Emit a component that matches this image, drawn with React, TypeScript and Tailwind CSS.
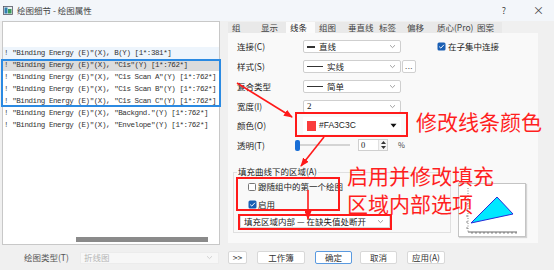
import React from "react";

const Chevron = ({ color = "#8a8a8a" }: { color?: string }) => (
  <svg width="7" height="5" viewBox="0 0 7 5" className="block shrink-0">
    <path d="M1 1.2 L3.5 3.6 L6 1.2" fill="none" stroke={color} strokeWidth="0.8" />
  </svg>
);

const Check = () => (
  <svg width="9" height="9" viewBox="0 0 9 9" className="block shrink-0">
    <rect x="0.5" y="0.5" width="8" height="8" rx="1.5" fill="#1a5fb4" />
    <path d="M2.2 4.6 L3.8 6.1 L6.9 2.8" fill="none" stroke="#fff" strokeWidth="1" />
  </svg>
);

const Dropdown = ({ children, arrow }: { children?: React.ReactNode; arrow?: React.ReactNode }) => (
  <div className="flex h-[13px] w-[98px] items-center rounded-[2px] border border-[#cfcfcf] bg-white pl-[3px] pr-[4px]">
    <div className="flex flex-1 items-center gap-[3px] leading-none">{children}</div>
    {arrow ?? <Chevron />}
  </div>
);

const rows = [
  `! "Binding Energy (E)"(X), B(Y) [1*:381*]`,
  `! "Binding Energy (E)"(X), "C1s"(Y) [1*:762*]`,
  `! "Binding Energy (E)"(X), "C1s Scan A"(Y) [1*:762*]`,
  `! "Binding Energy (E)"(X), "C1s Scan B"(Y) [1*:762*]`,
  `! "Binding Energy (E)"(X), "C1s Scan C"(Y) [1*:762*]`,
  `! "Binding Energy (E)"(X), "Backgnd."(Y) [1*:762*]`,
  `! "Binding Energy (E)"(X), "Envelope"(Y) [1*:762*]`,
];

const tabs: { t: string; w: string }[] = [
  { t: "组", w: "w-[29px]" },
  { t: "显示", w: "w-[29px]" },
  { t: "线条", w: "w-[29px]" },
  { t: "组图", w: "w-[29px]" },
  { t: "垂直线", w: "w-[31px]" },
  { t: "标签", w: "w-[28px]" },
  { t: "偏移", w: "w-[30px]" },
  { t: "质心(Pro)", w: "w-[40px]" },
  { t: "图案", w: "w-[29px]" },
];

const Btn = ({ children, w, primary }: { children: React.ReactNode; w: string; primary?: boolean }) => (
  <div
    className={`flex h-[13px] items-center justify-center rounded-[2px] border bg-white text-[8.5px] leading-none text-[#333] ${w} ${
      primary ? "border-[#5a9ae0]" : "border-[#d8d8d8]"
    }`}
  >
    {children}
  </div>
);

export default function App() {
  return (
    <div className="relative h-[270px] w-[554px] overflow-hidden bg-[#f0f0f0] font-['Noto_Sans_CJK_SC','Noto_Sans',sans-serif] text-[#222]">
      {/* Title bar */}
      <div className="flex h-[21px] items-center bg-[#f3f6fa]">
        <svg width="10" height="9" viewBox="0 0 10 9" className="ml-[3px] block shrink-0">
          <rect x="0.5" y="0.5" width="9" height="8" fill="#e8f0f0" stroke="#556" strokeWidth="0.8" />
          <rect x="1.5" y="1.5" width="3" height="6" fill="#2f7fb0" />
          <rect x="5" y="3" width="3.5" height="4.5" fill="#3a9a5a" />
        </svg>
        <span className="ml-[4px] text-[8.5px] leading-none text-[#444]">绘图细节 - 绘图属性</span>
        <span className="ml-auto mr-[27px] text-[9px] leading-none text-[#444]">?</span>
        <span className="mr-[10px] text-[11px] leading-none text-[#444]">×</span>
      </div>

      {/* Body */}
      <div className="flex h-[224px]">
        {/* Left list panel */}
        <div className="ml-[2px] flex h-[224px] w-[218px] flex-col border border-[#c8c8c8] bg-white">
          <div className="flex-1 overflow-hidden pt-[25px]">
            {rows.map((r, i) => (
              <div
                key={i}
                className={`h-[12px] whitespace-pre pl-[1px] font-['Liberation_Mono','DejaVu_Sans_Mono',monospace] text-[7.5px] leading-[12px] tracking-[-0.42px] text-[#333] ${
                  i === 0 ? "bg-[#eef5fc]" : i === 1 ? "bg-[#dcdcdc]" : ""
                }`}
              >
                {r}
              </div>
            ))}
          </div>
          <div className="h-[8px]">
            <div className="ml-[73px] mt-[1px] h-[5px] w-[132px] bg-[#8a8a8a]" />
          </div>
        </div>

        {/* Right area */}
        <div className="ml-[8px] flex w-[310px] flex-col">
          {/* Tabs */}
          <div className="mt-[1px] flex h-[11px]">
            {tabs.map((t) => (
              <div
                key={t.t}
                className={`flex h-[11px] shrink-0 items-center whitespace-nowrap pl-[4px] text-[8.5px] leading-none ${t.w} ${
                  t.t === "线条" ? "bg-[#fbfbfb] text-[#222]" : "bg-[#e9e9e9] text-[#444]"
                }`}
              >
                {t.t}
              </div>
            ))}
          </div>

          {/* Tab panel */}
          <div className="flex h-[210px] flex-col bg-[#f9f9f9] pl-[9px] pt-[7px] text-[8.5px] leading-none">
            {/* 连接 */}
            <div className="flex h-[13px] items-center">
              <span className="w-[66px]">连接(C)</span>
              <Dropdown>
                <div className="h-[2px] w-[8px] bg-[#333]" />
                <span className="ml-[1px]">直线</span>
              </Dropdown>
              <div className="ml-[36px] flex items-center gap-[2px]">
                <Check />
                <span>在子集中连接</span>
              </div>
            </div>
            {/* 样式 */}
            <div className="mt-[7px] flex h-[13px] items-center">
              <span className="w-[66px]">样式(S)</span>
              <Dropdown>
                <div className="h-[1px] w-[16px] bg-[#333]" />
                <span className="ml-[1px]">实线</span>
              </Dropdown>
              <div className="ml-[1px] flex h-[13px] w-[14px] items-center justify-center rounded-[2px] border border-[#d0d0d0] bg-white pb-[2px] text-[8px] tracking-[0.5px] text-[#555]">
                ...
              </div>
            </div>
            {/* 复合类型 */}
            <div className="mt-[7px] flex h-[13px] items-center">
              <span className="w-[66px]">复合类型</span>
              <Dropdown>
                <div className="h-[1px] w-[16px] bg-[#333]" />
                <span className="ml-[1px]">简单</span>
              </Dropdown>
            </div>
            {/* 宽度 */}
            <div className="mt-[7px] flex h-[13px] items-center">
              <span className="w-[66px]">宽度(I)</span>
              <Dropdown>
                <span className="font-['Liberation_Serif',serif] text-[9px]">2</span>
              </Dropdown>
            </div>
            {/* 颜色 */}
            <div className="mt-[4px] flex h-[17px] items-center">
              <span className="w-[66px]">颜色(O)</span>
              <div className="flex h-[17px] w-[98px] items-center bg-white pl-[4px] pr-[4px]">
                <div className="h-[10px] w-[9px] bg-[#fa3c3c]" />
                <span className="ml-[3px] flex-1 font-['Liberation_Sans',sans-serif] text-[8.5px] text-[#222]">#FA3C3C</span>
                <svg width="7" height="5" viewBox="0 0 7 5" className="block">
                  <path d="M0.5 0.8 L6.5 0.8 L3.5 4.5 Z" fill="#111" />
                </svg>
              </div>
            </div>
            {/* 透明 */}
            <div className="mt-[5px] flex h-[12px] items-center">
              <span className="w-[58px]">透明(T)</span>
              <div className="h-[11px] w-[5px] rounded-[2px] bg-[#1a6fd6]" />
              <div className="h-[2px] w-[50px] bg-[#d4d4d4]" />
              <div className="ml-[8px] flex h-[12px] w-[30px] items-center border border-[#cfcfcf] bg-white">
                <span className="flex-1 pl-[2px] font-['Liberation_Serif',serif] text-[8.5px]">0</span>
                <div className="flex h-full w-[9px] flex-col items-center justify-center gap-[2px] border-l border-[#e0e0e0] bg-[#f4f4f4]">
                  <svg width="5" height="3" viewBox="0 0 5 3" className="block">
                    <path d="M0 3 L2.5 0 L5 3 Z" fill="#333" />
                  </svg>
                  <svg width="5" height="3" viewBox="0 0 5 3" className="block">
                    <path d="M0 0 L2.5 3 L5 0 Z" fill="#333" />
                  </svg>
                </div>
              </div>
              <span className="ml-[10px] text-[7.5px] text-[#444]">%</span>
            </div>

            {/* Group + preview */}
            <div className="ml-[-4px] mt-[14px] flex items-start">
              <div className="relative h-[68px] w-[218px] shrink-0">
                <div className="mt-[7px] h-[61px] border border-[#e0e0e0]">
                  <div className="ml-[14px] mt-[9px] flex h-[9px] items-center gap-[2px]">
                    <div className="h-[8px] w-[8px] rounded-[1.5px] border border-[#777] bg-white" />
                    <span>跟随组中的第一个绘图</span>
                  </div>
                  <div className="ml-[14px] mt-[9px] flex h-[9px] items-center gap-[1px]">
                    <Check />
                    <span>启用</span>
                  </div>
                  <div className="ml-[6px] mt-[5px] flex h-[14px] w-[150px] items-center border border-[#d8d8d8] bg-white pl-[3px] pr-[5px]">
                    <span className="flex-1 whitespace-pre">填充区域内部 — 在缺失值处断开</span>
                    <Chevron />
                  </div>
                </div>
                <span className="absolute left-[4px] top-[2px] bg-[#f9f9f9] px-[1px] leading-none">
                  填充曲线下的区域(A)
                </span>
              </div>
              <div className="ml-[7px] mt-[18px] h-[54px] w-[68px] shrink-0 overflow-hidden border border-[#c4c4c4] bg-white shadow-[1px_1px_1px_rgba(0,0,0,0.15)]">
                <svg width="66" height="52" viewBox="0 0 66 52" className="block">
                  <line x1="9" y1="4" x2="9" y2="48" stroke="#555" strokeWidth="0.7" strokeDasharray="1 1.5" />
                  <line x1="9" y1="48" x2="58" y2="48" stroke="#444" strokeWidth="0.8" />
                  {[13, 17, 21, 25, 29, 33, 37, 41, 45, 49, 53, 57].map((x) => (
                    <line key={x} x1={x} y1="48" x2={x} y2="50" stroke="#444" strokeWidth="0.6" />
                  ))}
                  {[20, 26, 32, 38, 44].map((y) => (
                    <line key={y} x1="7" y1={y} x2="9" y2={y} stroke="#444" strokeWidth="0.6" />
                  ))}
                  <polygon points="12,39 38,13 54,30" fill="#00e8ff" stroke="#2a2ad8" strokeWidth="1" />
                </svg>
              </div>
            </div>
          </div>
        </div>
      </div>

      {/* Bottom bar */}
      <div className="flex h-[25px] items-center pl-[24px] text-[8.5px] leading-none">
        <span className="w-[56px] text-[#555]">绘图类型(T)</span>
        <div className="flex h-[12px] w-[139px] items-center border border-[#ececec] bg-[#f7f7f7] pl-[3px] pr-[5px]">
          <span className="flex-1 text-[#b5b5b5]">折线图</span>
          <Chevron color="#c8c8c8" />
        </div>
        <div className="ml-[9px]">
          <Btn w="w-[19px]">&gt;&gt;</Btn>
        </div>
        <div className="ml-[10px]">
          <Btn w="w-[48px]">工作簿</Btn>
        </div>
        <div className="ml-[10px]">
          <Btn w="w-[37px]" primary>
            确定
          </Btn>
        </div>
        <div className="ml-[8px]">
          <Btn w="w-[37px]">取消</Btn>
        </div>
        <div className="ml-[10px]">
          <Btn w="w-[38px]">应用(A)</Btn>
        </div>
      </div>

      {/* Overlays: selection, highlight boxes, arrows, notes */}
      <div className="pointer-events-none absolute left-[1px] top-[59px] h-[48px] w-[220px] border-2 border-[#2b8ae2]" />
      <div className="pointer-events-none absolute left-[295px] top-[112px] h-[25px] w-[113px] border-2 border-[#ff1a1a]" />
      <div className="pointer-events-none absolute left-[236px] top-[177px] h-[34px] w-[104px] border-2 border-[#ff1a1a]" />
      <div className="pointer-events-none absolute left-[238px] top-[214px] h-[16px] w-[154px] border-2 border-[#ff1a1a]" />

      <svg className="pointer-events-none absolute left-0 top-0 block" width="554" height="270" viewBox="0 0 554 270">
        <defs>
          <marker id="ah" markerWidth="9" markerHeight="7" refX="8" refY="3.5" orient="auto" markerUnits="userSpaceOnUse">
            <path d="M0 0 L9 3.5 L0 7 Z" fill="#ff1a1a" />
          </marker>
        </defs>
        <line x1="237" y1="83" x2="292" y2="117" stroke="#ff1a1a" strokeWidth="1.6" markerEnd="url(#ah)" />
        <line x1="324" y1="137" x2="301" y2="166" stroke="#ff1a1a" strokeWidth="1.6" markerEnd="url(#ah)" />
        <line x1="308" y1="190" x2="308" y2="219" stroke="#ff1a1a" strokeWidth="1.6" markerEnd="url(#ah)" />
      </svg>

      <div className="pointer-events-none absolute left-[416px] top-[109px] text-[21px] leading-[24px] text-[#ff1f1f]">
        修改线条颜色
      </div>
      <div className="pointer-events-none absolute left-[347px] top-[161px] text-[21px] leading-[28px] text-[#ff1f1f]">
        <div>启用并修改填充</div>
        <div>区域内部选项</div>
      </div>
    </div>
  );
}
